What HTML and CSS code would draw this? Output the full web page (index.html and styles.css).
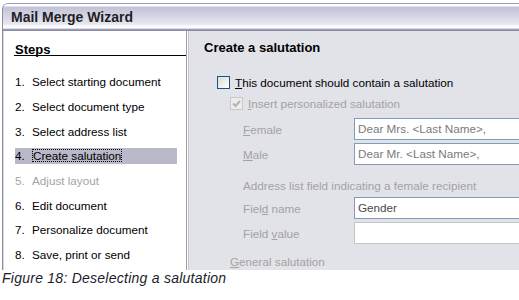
FILE: index.html
```html
<!DOCTYPE html>
<html lang="en">
<head>
  <meta charset="UTF-8">
  <title>Mail Merge Wizard</title>
  <link rel="stylesheet" href="styles.css">
</head>
<body>
  <div class="Window">
    <div class="Window-Title">Mail Merge Wizard</div>

    <div class="Window-Body">
      <div class="Steps">
        <div class="Steps-Head">Steps</div>
        <ul class="Steps-List">
          <li><span class="Steps-Num">1.</span>Select starting document</li>
          <li><span class="Steps-Num">2.</span>Select document type</li>
          <li><span class="Steps-Num">3.</span>Select address list</li>
          <li class="is-current"><span class="Steps-Num">4.</span><span class="Steps-Focus">Create salutation</span></li>
          <li class="is-disabled"><span class="Steps-Num">5.</span>Adjust layout</li>
          <li><span class="Steps-Num">6.</span>Edit document</li>
          <li><span class="Steps-Num">7.</span>Personalize document</li>
          <li><span class="Steps-Num">8.</span>Save, print or send</li>
        </ul>
      </div>

      <div class="Page">
        <div class="Page-Title">Create a salutation</div>

        <div class="Check Check-Main">
          <span class="Check-Box"></span>
          <span><u>T</u>his document should contain a salutation</span>
        </div>

        <div class="Check Check-Sub">
          <span class="Check-Box Check-Box-Off">
            <svg width="11" height="11" viewBox="0 0 11 11"><path d="M2 5.5 L4.5 8 L9 3" fill="none" stroke="#b4b4b4" stroke-width="2"/></svg>
          </span>
          <span><u>I</u>nsert personalized salutation</span>
        </div>

        <div class="Field Field-First">
          <span class="Field-Label"><u>F</u>emale</span>
          <div class="Field-Input">Dear Mrs. &lt;Last Name&gt;,</div>
        </div>
        <div class="Field">
          <span class="Field-Label"><u>M</u>ale</span>
          <div class="Field-Input">Dear Mr. &lt;Last Name&gt;,</div>
        </div>

        <div class="Page-Note">Address list field indicating a female recipient</div>

        <div class="Field">
          <span class="Field-Label">Fiel<u>d</u> name</span>
          <div class="Field-Input Field-Input-Dark">Gender</div>
        </div>
        <div class="Field">
          <span class="Field-Label">Field <u>v</u>alue</span>
          <div class="Field-Input Field-Input-Off"></div>
        </div>

        <div class="Page-General"><u>G</u>eneral salutation</div>
      </div>
    </div>
  </div>

  <div class="Caption">Figure 18: Deselecting a salutation</div>
</body>
</html>
```

FILE: styles.css
```css
* {
  margin: 0;
  padding: 0;
  box-sizing: border-box;
}

body {
  overflow: hidden;
  background-color: #ffffff;
  width: 519px;
  height: 300px;
  font-family: 'Liberation Sans', Arial, sans-serif;
}

.Window {
  margin: 3px 0 0 2px;
  height: 267px;
  overflow: hidden;
  border-left: 1px solid #8f8f9e;
  border-top: 1px solid #9c9cb6;
  border-top-left-radius: 6px;
  background-color: #e2e2e9;
}

.Window-Title {
  height: 27px;
  padding-left: 8px;
  font-size: 14px;
  font-weight: bold;
  line-height: 26px;
  color: #1e1e24;
  background: linear-gradient(to bottom,
    #ffffff 0, #ffffff 2px,
    #c2c2d8 3px, #d4d4e4 12px, #e6e6ef 20px,
    #fbfbfd 22px, #ffffff 24px,
    #b4b4c8 25px, #8a8aa4 26px);
}

.Window-Body {
  display: flex;
  height: 240px;
  border-left: 1px solid #d6d6de;
}

.Steps {
  width: 183px;
  flex-shrink: 0;
  background-color: #ffffff;
  padding: 12px 9px 0 11px;
  border-right: 1px solid #9e9e9e;
  box-shadow: 1px 0 0 #ffffff, 2px 0 0 #c4c4cc;
  margin-right: 2px;
}

.Steps-Head {
  height: 13px;
  margin: 0 -9px 0 -1px;
  font-size: 13px;
  font-weight: bold;
  line-height: 13px;
  padding-left: 1px;
  text-decoration: underline;
  color: #000000;
  border-bottom: 1px solid #000000;
}

.Steps-List {
  list-style: none;
  margin-top: 18.3px;
  display: flex;
  flex-direction: column;
  gap: 8.67px;
}

.Steps-List li {
  height: 16px;
  font-size: 11.7px;
  line-height: 16px;
  color: #000000;
  white-space: nowrap;
}

.Steps-Num {
  display: inline-block;
  width: 17px;
}

.Steps-List li.is-current {
  background-color: #b9b9c9;
}

.Steps-List li.is-disabled {
  color: #a4a4a4;
}

.Steps-Focus {
  outline: 1px dotted #000000;
  outline-offset: -1px;
  padding: 0 1px;
}

.Page {
  flex: 1;
  min-width: 0;
  padding: 9px 0 0 15px;
  font-size: 11.7px;
  color: #a2a2a2;
  white-space: nowrap;
}

.Page-Title {
  height: 16px;
  font-size: 13px;
  font-weight: bold;
  line-height: 16px;
  color: #000000;
}

.Check {
  display: flex;
  align-items: center;
  height: 13px;
  gap: 5px;
  line-height: 13px;
}

.Check-Main {
  margin: 20px 0 0 13px;
  color: #000000;
}

.Check-Sub {
  margin: 8px 0 0 26px;
}

.Check-Box {
  width: 13px;
  height: 13px;
  flex-shrink: 0;
  border: 1px solid #1c5180;
  background: linear-gradient(135deg, #dcdcd6 0, #f4f4f0 70%, #ffffff 100%);
}

.Check-Box-Off {
  border-color: #c8c8c8;
  background: #ececec;
}

.Check-Box-Off svg {
  display: block;
}

.Field {
  display: flex;
  align-items: center;
  margin: 3px 0 0 39px;
  height: 22px;
}

.Field-First {
  margin-top: 8px;
}

.Field-Label {
  width: 111px;
  flex-shrink: 0;
}

.Field-Input {
  flex: 1;
  height: 22px;
  padding-left: 3px;
  line-height: 20px;
  color: #7a7a7a;
  background-color: #ffffff;
  border: 1px solid #7f9db9;
  border-right: none;
}

.Field-Input-Dark {
  color: #4a4a4a;
}

.Field-Input-Off {
  border-color: #c4c4c4;
}

.Page-Note {
  margin: 13px 0 0 39px;
  height: 16px;
  line-height: 16px;
}

.Page-General {
  margin: 10px 0 0 26px;
  height: 16px;
  line-height: 16px;
}

.Caption {
  padding-left: 2px;
  height: 16px;
  line-height: 16px;
  font-size: 14px;
  font-style: italic;
  letter-spacing: 0.25px;
  color: #1c1c2c;
}
```
